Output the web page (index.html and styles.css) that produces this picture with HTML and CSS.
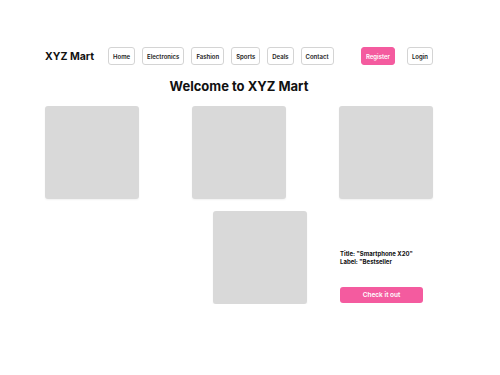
FILE: index.html
```html
<!DOCTYPE html>
<html lang="en">
<head>
    <meta charset="utf-8" />
    <title>XYZ Mart</title>
    <link rel="stylesheet" href="styles.css">
</head>
<body>
    <header class="topbar">
        <div class="logo">XYZ Mart</div>
        <nav class="nav">
            <a class="btn" href="#">Home</a>
            <a class="btn" href="#">Electronics</a>
            <a class="btn" href="#">Fashion</a>
            <a class="btn" href="#">Sports</a>
            <a class="btn" href="#">Deals</a>
            <a class="btn" href="#">Contact</a>
        </nav>
        <div class="account">
            <a class="btn btn-pink" href="#">Register</a>
            <a class="btn" href="#">Login</a>
        </div>
    </header>

    <main>
        <h1 class="welcome">Welcome to XYZ Mart</h1>

        <section class="grid">
            <div class="thumb"></div>
            <div class="thumb"></div>
            <div class="thumb"></div>
        </section>

        <section class="featured">
            <div class="thumb"></div>
            <div class="info">
                <p class="info-text">Title: "Smartphone X20"<br>Label: "Bestseller</p>
                <a class="cta" href="#">Check it out</a>
            </div>
        </section>
    </main>
</body>
</html>
```

FILE: styles.css
```css
* {
    box-sizing: border-box;
    font-family: "Inter", "Noto Sans", sans-serif;
}

body {
    margin: 0;
    padding: 47px 67px 0 45px;
    background: #fff;
    color: #111;
}

.topbar {
    display: flex;
    align-items: center;
    height: 18px;
}

.logo {
    flex-shrink: 0;
    width: 63px;
    font-size: 10.5px;
    font-weight: 700;
    white-space: nowrap;
}

.nav {
    display: flex;
    flex-shrink: 0;
    gap: 7px;
}

.account {
    display: flex;
    flex-shrink: 0;
    gap: 12px;
    margin-left: auto;
}

.btn {
    display: flex;
    align-items: center;
    flex-shrink: 0;
    height: 18px;
    padding: 0 4px;
    border: 1px solid #d4d4d4;
    border-radius: 3px;
    background: #fff;
    color: #222;
    font-size: 6px;
    font-weight: 600;
    white-space: nowrap;
    text-decoration: none;
}

.btn-pink {
    background: #f45b9f;
    border-color: #f45b9f;
    color: #fff;
}

.welcome {
    margin: 14px 0 12px;
    text-align: center;
    font-size: 13px;
    font-weight: 700;
    line-height: 15px;
}

.thumb {
    width: 94px;
    height: 93px;
    background: #d9d9d9;
    border-radius: 3px;
    box-shadow: 0 1px 2px rgba(0, 0, 0, 0.06);
}

.grid {
    display: flex;
    justify-content: space-between;
}

.featured {
    display: flex;
    align-items: flex-end;
    margin: 12px 0 0 168px;
    gap: 33px;
}

.info {
    width: 83px;
    padding-bottom: 1px;
}

.info-text {
    margin: 0 0 21px;
    font-size: 6px;
    font-weight: 700;
    line-height: 8px;
}

.cta {
    display: flex;
    align-items: center;
    justify-content: center;
    height: 16px;
    border-radius: 3px;
    background: #f45b9f;
    color: #fff;
    font-size: 6.5px;
    font-weight: 600;
    text-decoration: none;
}
```
